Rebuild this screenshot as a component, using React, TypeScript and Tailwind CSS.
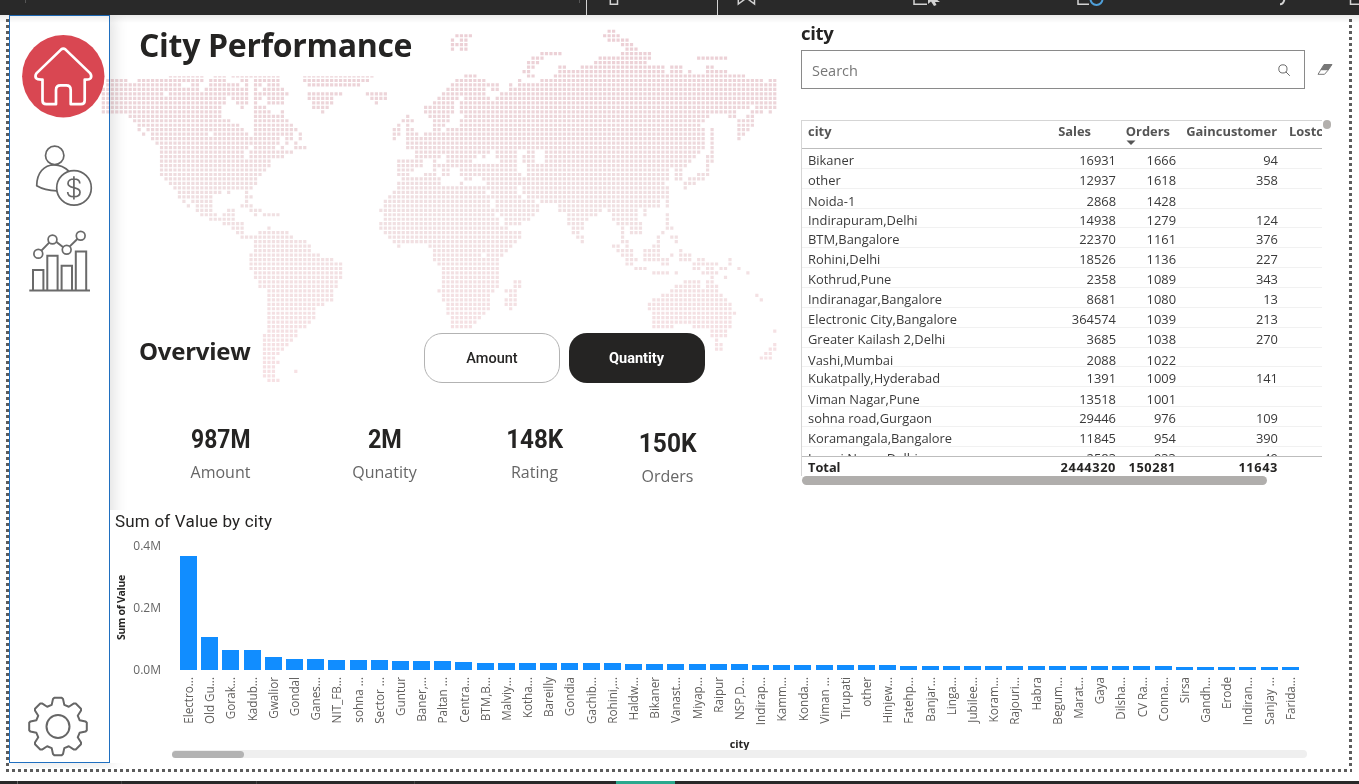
import React from "react";

type Run = [number, number];

// Land runs of the dotted world map, one entry per row: [from, to] along the row.
const WEST: Record<number, Run[]> = {
  10: [[210, 300], [345, 375], [400, 535], [612, 815]],
  11: [[23, 80], [117, 200], [216, 310], [330, 375], [425, 440], [465, 535], [612, 805]],
  12: [[23, 185], [196, 240], [278, 295], [330, 410], [438, 438], [465, 480], [505, 535], [625, 778]],
  13: [[10, 290], [318, 395], [412, 440], [465, 465], [492, 548]],
  14: [[10, 190], [212, 440], [465, 480], [492, 562], [625, 722], [802, 855]],
  15: [[10, 378], [398, 440], [465, 480], [505, 548], [625, 695], [815, 855]],
  16: [[10, 205], [225, 370], [412, 440], [465, 465], [505, 548], [640, 695], [828, 828]],
  17: [[10, 232], [250, 365], [425, 425], [465, 495], [640, 680]],
  18: [[10, 360], [465, 508], [548, 548], [668, 668]],
  19: [[90, 362], [465, 548]],
  20: [[104, 388], [465, 562]],
  21: [[117, 415], [465, 575]],
  22: [[117, 117], [144, 430], [465, 588]],
  23: [[131, 131], [158, 320], [345, 440], [465, 575], [600, 600]],
  24: [[158, 535], [562, 575], [600, 600]],
  25: [[171, 535], [562, 562], [588, 588]],
  26: [[185, 415], [428, 440], [465, 520], [548, 548], [588, 615]],
  27: [[185, 428], [452, 575]],
  28: [[185, 428], [452, 548]],
  29: [[185, 508]],
  30: [[185, 508]],
  31: [[185, 495]],
  32: [[185, 480]],
  33: [[198, 468]],
  34: [[212, 468]],
  35: [[225, 455]],
  36: [[238, 360], [387, 387], [440, 440]],
  37: [[238, 335], [440, 455]],
  38: [[252, 252], [278, 335], [440, 440]],
  39: [[265, 265], [290, 335], [425, 455]],
  40: [[292, 335], [387, 400], [452, 480]],
  41: [[305, 348], [372, 400], [465, 465], [492, 535]],
  42: [[332, 400]],
  43: [[372, 428]],
  44: [[400, 428], [507, 507]],
  45: [[415, 425], [480, 562]],
  46: [[428, 575]],
  47: [[465, 615]],
  48: [[465, 628]],
  49: [[465, 628]],
  50: [[452, 655]],
  51: [[452, 695]],
  52: [[452, 722]],
  53: [[452, 722]],
  54: [[465, 722]],
  55: [[465, 722]],
  56: [[480, 708]],
  57: [[480, 708]],
  58: [[505, 695]],
  59: [[505, 695]],
  60: [[505, 695]],
  61: [[505, 668]],
  62: [[505, 642]],
  63: [[505, 642]],
  64: [[505, 642]],
  65: [[505, 628]],
  66: [[505, 615]],
  67: [[505, 588]],
  68: [[493, 588]],
  69: [[493, 575]],
  70: [[493, 562]],
  71: [[493, 548]],
  72: [[493, 535]],
  73: [[493, 522]],
  74: [[493, 535]],
  75: [[493, 522]],
  76: [[493, 522], [587, 587]],
  77: [[493, 522]],
  78: [[507, 535]],
};

const EAST: Record<number, Run[]> = {
  0: [[688, 700]],
  1: [[230, 272], [675, 713]],
  2: [[213, 213], [245, 258], [688, 713], [728, 740]],
  3: [[213, 258], [728, 755]],
  4: [[213, 213], [245, 258], [740, 768]],
  5: [[485, 540], [728, 808]],
  6: [[458, 485], [660, 808], [955, 1038]],
  7: [[445, 472], [648, 795]],
  8: [[445, 458], [540, 555], [607, 850], [875, 903], [983, 997]],
  9: [[432, 445], [540, 850], [875, 903], [930, 930], [983, 1038]],
  10: [[258, 285], [445, 458], [527, 1090]],
  11: [[232, 312], [418, 418], [485, 1145], [1170, 1184]],
  12: [[218, 350], [392, 392], [418, 560], [580, 1184]],
  13: [[205, 312], [338, 350], [392, 560], [580, 1184]],
  14: [[190, 312], [365, 1184]],
  15: [[178, 232], [258, 325], [352, 1184]],
  16: [[165, 218], [245, 1184]],
  17: [[138, 218], [245, 1103], [1130, 1184]],
  18: [[138, 218], [245, 1063], [1117, 1145], [1170, 1170]],
  19: [[83, 83], [152, 205], [258, 985], [1050, 1062], [1103, 1117]],
  20: [[70, 97], [165, 205], [245, 970], [1077, 1117]],
  21: [[56, 56], [83, 83], [165, 190], [245, 960], [1077, 1117]],
  22: [[43, 56], [83, 97], [165, 178], [205, 970], [997, 997], [1077, 1103]],
  23: [[43, 56], [83, 110], [138, 970], [997, 997], [1077, 1090]],
  24: [[43, 43], [83, 970], [997, 997], [1077, 1077]],
  25: [[83, 970], [997, 997]],
  26: [[83, 970], [997, 997]],
  27: [[110, 325], [350, 405], [445, 460], [500, 955], [997, 997]],
  28: [[110, 180], [205, 285], [310, 310], [350, 405], [432, 460], [500, 945], [983, 997]],
  29: [[56, 125], [165, 165], [205, 270], [365, 405], [432, 458], [500, 930], [983, 997]],
  30: [[56, 125], [165, 178], [190, 405], [445, 917], [983, 983]],
  31: [[56, 97], [165, 165], [190, 205], [245, 405], [445, 860], [890, 903], [983, 983]],
  32: [[56, 83], [138, 165], [190, 205], [245, 418], [445, 860], [890, 903], [957, 983]],
  33: [[70, 178], [258, 270], [312, 418], [432, 860], [890, 903], [930, 970]],
  34: [[56, 178], [245, 245], [325, 850], [917, 943]],
  35: [[56, 405], [432, 860], [917, 917]],
  36: [[43, 312], [338, 405], [432, 860]],
  37: [[30, 325], [338, 418], [445, 860]],
  38: [[16, 325], [350, 445], [458, 458], [485, 835], [862, 862]],
  39: [[16, 325], [350, 470], [540, 835], [862, 862]],
  40: [[3, 338], [352, 470], [540, 555], [567, 660], [688, 768], [795, 795]],
  41: [[16, 338], [365, 460], [567, 640], [700, 770], [795, 795], [862, 862]],
  42: [[16, 350], [378, 445], [567, 620], [700, 770], [862, 862]],
  43: [[3, 350], [378, 420], [567, 608], [715, 782], [862, 862]],
  44: [[3, 378], [580, 608], [728, 728], [755, 782], [862, 875]],
  45: [[16, 418], [580, 595], [728, 728], [755, 782], [848, 848]],
  46: [[30, 418], [595, 608], [728, 728], [835, 835], [875, 890]],
  47: [[43, 405], [608, 608], [728, 740], [835, 835], [890, 890]],
  48: [[56, 56], [152, 390], [700, 713], [740, 740], [822, 835]],
  49: [[165, 378], [713, 755], [795, 835], [903, 903]],
  50: [[165, 300], [325, 365], [728, 755], [795, 835], [875, 875], [903, 930]],
  51: [[165, 350], [740, 768], [795, 835], [848, 862], [903, 930], [957, 970], [1050, 1050]],
  52: [[178, 350], [740, 755], [848, 862], [943, 1010], [1050, 1050]],
  53: [[190, 350], [768, 795], [943, 957], [983, 1000], [1023, 1037], [1077, 1077]],
  54: [[190, 350], [822, 862], [890, 890], [970, 1010], [1103, 1103]],
  55: [[190, 350], [997, 997], [1037, 1037]],
  56: [[190, 350], [405, 418], [917, 957], [983, 997]],
  57: [[190, 350], [405, 418], [890, 957], [983, 1010]],
  58: [[178, 338], [378, 405], [875, 1010]],
  59: [[190, 325], [392, 405], [848, 1025], [1130, 1130]],
  60: [[190, 325], [378, 405], [822, 1037], [1145, 1145]],
  61: [[205, 325], [378, 405], [808, 1050]],
  62: [[205, 325], [392, 392], [808, 1050]],
  63: [[205, 312], [822, 1063]],
  64: [[218, 300], [822, 1050]],
  65: [[218, 285], [822, 1050]],
  66: [[218, 272], [822, 875], [943, 1050]],
  67: [[1000, 1037], [1184, 1184]],
  68: [[1000, 1037]],
  69: [[1010, 1010]],
  70: [[1010, 1023], [1184, 1184]],
  71: [[1010, 1023], [1170, 1184]],
  72: [[1157, 1170]],
  73: [[1145, 1170]],
};

const PITCH = 4.476;

function mapPath(): string {
  const dots = new Set<string>();
  const collect = (table: Record<number, Run[]>, shift: number) => {
    Object.entries(table).forEach(([row, runs]) => {
      runs.forEach(([a, b]) => {
        const from = Math.round((a + shift - 9.6) / (PITCH * 3));
        const to = Math.round((b + shift - 9.6) / (PITCH * 3));
        for (let c = from; c <= to; c++) dots.add(`${c},${row}`);
      });
    });
  };
  collect(WEST, 0);
  collect(EAST, 840);
  let d = "";
  dots.forEach((key) => {
    const [c, r] = key.split(",").map(Number);
    const x = 1.75 + c * PITCH;
    const y = 1.65 + r * PITCH;
    // The northern edge of the Americas is cut through the middle of its dots.
    const cut = r === 10 && c < 62 ? 1.8 : 0;
    d += `M${x.toFixed(2)} ${(y + cut).toFixed(2)}h3.2v${(3.2 - cut).toFixed(1)}h-3.2z`;
  });
  return d;
}

const MAP_PATH = mapPath();

function WorldMap() {
  return (
    <svg className="pointer-events-none absolute left-[100px] top-[28px]" width="680" height="358" viewBox="0 0 680 358">
      <defs>
        <linearGradient id="land" x1="0" y1="0" x2="0" y2="358" gradientUnits="userSpaceOnUse">
          <stop offset="0" stopColor="#eccfd5" />
          <stop offset="0.25" stopColor="#edd6da" />
          <stop offset="0.5" stopColor="#f0e0e2" />
          <stop offset="1" stopColor="#f7e1e4" />
        </linearGradient>
      </defs>
      <path d={MAP_PATH} fill="url(#land)" />
    </svg>
  );
}

function gearPath(): string {
  const tooth: Run[] = [[-6.3, -21.6], [-5, -27.6], [-3.7, -28.8], [3.7, -28.8], [5, -27.6], [6.3, -21.6]];
  const pts: string[] = [];
  for (let i = 0; i < 8; i++) {
    const t = (i * Math.PI) / 4;
    tooth.forEach(([x, y]) => {
      pts.push(`${(x * Math.cos(t) - y * Math.sin(t)).toFixed(2)} ${(x * Math.sin(t) + y * Math.cos(t)).toFixed(2)}`);
    });
  }
  return `M${pts.join("L")}Z`;
}

function Sidebar() {
  return (
    <aside className="flex h-[748px] w-[101px] shrink-0 flex-col items-start border border-[#1f6fc0] bg-white shadow-[4px_0_14px_rgba(0,0,0,0.12)]">
      <svg className="ml-3 mt-[19px]" width="83" height="84" viewBox="22 35 83 84">
        <circle cx="63.3" cy="76.3" r="41.2" fill="#d94752" />
        <path
          d="M61 49.6Q63.3 47.6 65.6 49.6L90.3 73.4Q92 76 90.6 78.2Q89.4 79.8 84.7 79.6V100.6Q84.7 104.2 81 104.2H70.7V90Q70.7 85.4 66.2 85.4H60.6Q56 85.4 56 90V104.2H46.2Q42.5 104.2 42.5 100.6V79.6Q37.4 79.8 36 78.2Q34.8 76 36.4 73.4Z"
          fill="none" stroke="#fff" strokeWidth="2.7" strokeLinejoin="round"
        />
      </svg>
      <svg className="ml-[25px] mt-[25px]" width="60" height="64" viewBox="35 144 60 64" fill="none" stroke="#666" strokeWidth="1.7">
        <circle cx="54.7" cy="155.4" r="9.2" />
        <path d="M57 190.9C50 190.7 42 189 36.7 185.8C36.7 173 44 164.8 54.2 164.8C60 164.8 65 167.3 68.8 171.2" strokeLinejoin="round" />
        <circle cx="74" cy="187.9" r="17.3" />
        <path d="M73.9 176.2V199.4M79.8 183.6C79.8 180.6 77.4 179 73.9 179C70.4 179 68 180.8 68 183.4C68 189.4 80 185.8 80 192.2C80 195 77.4 196.7 73.9 196.7C70.2 196.7 67.7 195 67.7 191.9" />
      </svg>
      <svg className="ml-[18px] mt-[21px]" width="63" height="64" viewBox="28 229 63 64" fill="none" stroke="#6a6a6a" strokeWidth="2">
        <path d="M29.3 290.4H90M33 290V270H43.4V290M47.3 290V255.8H57.6V290M61.6 290V265.8H72V290M75.8 290V251.5H86.2V290M41.4 250.6L49.4 242.4M56.2 241.8L63.2 247.2M69.8 246.4L77.6 238.8" />
        <g strokeWidth="1.7">
          <circle cx="38.3" cy="253.8" r="4.4" />
          <circle cx="52.5" cy="239.5" r="4.4" />
          <circle cx="66.7" cy="249.8" r="4.4" />
          <circle cx="80.7" cy="235.8" r="4.4" />
        </g>
      </svg>
      <svg className="mb-[5px] ml-[18px] mt-auto" width="60" height="61" viewBox="-30 -30.5 60 61" fill="none" stroke="#666" strokeWidth="2" strokeLinejoin="round">
        <path d={gearPath()} />
        <circle r="11.5" />
      </svg>
    </aside>
  );
}

function Toolbar() {
  return (
    <header className="h-[15px] w-full shrink-0 bg-[#292929]">
      <svg width="1359" height="15" viewBox="0 0 1359 15" fill="none" stroke="#d2d2d2" strokeWidth="1.5">
        <path d="M25.5 0V3M579.5 0V3" stroke="#555" strokeWidth="1" />
        <path d="M586.5 0V15M717.5 0V15" strokeWidth="1" />
        <path d="M610.3 0V4.2H617.5V0" />
        <path d="M738.3 0V4L746.5 -2L754.5 4V0" />
        <path d="M914 0V4.3H927" />
        <path d="M928 0V4L931 1.5L934 6L936.5 5L935 2H940L936 -1H928Z" fill="#d2d2d2" stroke="none" />
        <path d="M1078 0V4.3H1089" />
        <path d="M1090.5 -1A6 6 0 0 0 1102.5 -1" stroke="#4f9fd8" strokeWidth="2" />
        <path d="M1284.5 -1Q1283.5 4.3 1280 4.3" strokeWidth="2" />
        <path d="M1350.5 0V4.3H1359" />
      </svg>
    </header>
  );
}

const CARDS = [
  { value: "987M", label: "Amount", box: "w-[163px]", fit: "scale-x-[0.88]" },
  { value: "2M", label: "Qunatity", box: "w-[165px]", fit: "scale-x-[0.9]" },
  { value: "148K", label: "Rating", box: "w-[135px]", fit: "scale-x-[0.93]" },
  { value: "150K", label: "Orders", box: "w-[131px] pt-1", fit: "scale-x-[0.94]" },
];

function Overview() {
  return (
    <section className="relative flex w-[691px] flex-col pl-[29px]">
      <h1 className="mt-[8px] h-11 whitespace-nowrap text-[32px] font-bold leading-[44px] tracking-[-0.3px] text-[#252423]">City Performance</h1>
      <div className="mt-[266px] flex h-[50px] items-start">
        <h2 className="w-[285px] text-[24px] font-bold leading-[36px] tracking-[-0.25px] text-[#252423]">Overview</h2>
        <button className="h-[50px] w-[136px] rounded-[18px] border border-[#b3b3b3] bg-white pt-[2px] text-[14.5px] font-medium text-[#252423] font-[Roboto,sans-serif]">Amount</button>
        <button className="ml-[9px] h-[50px] w-[136px] rounded-[18px] bg-[#252423] pr-px pt-[2px] text-[14.5px] font-bold text-white font-[Roboto,sans-serif]">Quantity</button>
      </div>
      <div className="mt-[40px] flex">
        {CARDS.map((c) => (
          <div key={c.label} className={`${c.box} flex flex-col items-center text-center`}>
            <div className={`${c.fit} h-8 text-[26px] font-bold leading-8 text-[#252423] font-[Roboto,sans-serif]`}>{c.value}</div>
            <div className="mt-[5px] h-6 text-[16px] leading-6 text-[#666]">{c.label}</div>
          </div>
        ))}
      </div>
    </section>
  );
}

const ROWS: [string, string, string, string][] = [
  ["Bikaner", "16931", "1666", "94"],
  ["other", "12937", "1618", "358"],
  ["Noida-1", "2868", "1428", ""],
  ["Indirapuram,Delhi", "14938", "1279", "124"],
  ["BTM,Bangalore", "22370", "1161", "376"],
  ["Rohini,Delhi", "18526", "1136", "227"],
  ["Kothrud,Pune", "2358", "1089", "343"],
  ["Indiranagar,Bangalore", "8681", "1080", "13"],
  ["Electronic City,Bangalore", "364574", "1039", "213"],
  ["Greater Kailash 2,Delhi", "3685", "1038", "270"],
  ["Vashi,Mumbai", "2088", "1022", ""],
  ["Kukatpally,Hyderabad", "1391", "1009", "141"],
  ["Viman Nagar,Pune", "13518", "1001", ""],
  ["sohna road,Gurgaon", "29446", "976", "109"],
  ["Koramangala,Bangalore", "11845", "954", "390"],
  ["Laxmi Nagar,Delhi", "2583", "933", "49"],
];

const GRID = "grid grid-cols-[214px_100px_60px_102px]";

function CityPanel() {
  return (
    <section className="flex w-[548px] flex-col">
      <h3 className="mt-[5px] h-[26px] text-[18.5px] font-bold leading-[26px] tracking-[-0.3px] text-[#252423]">city</h3>
      <div className="mt-[4px] flex h-[39px] items-center">
        <div className="flex h-[39px] w-[504px] items-center justify-between border border-[#8a8a8a] pl-[10px] pr-[14px]">
          <span className="pt-[2px] text-[14.5px] text-[#777]">Search</span>
          <svg className="mt-px" width="12.5" height="12.5" viewBox="0 0 14 14" fill="none" stroke="#666" strokeWidth="1.1">
            <circle cx="5.5" cy="5.5" r="4.6" />
            <path d="M8.8 8.8L13.2 13.2" />
          </svg>
        </div>
        <svg className="ml-3" width="16" height="14" viewBox="0 0 16 14" stroke="#777" strokeWidth="1">
          <path d="M7 1.5H15L11 7.3H3.5Z" fill="#777" />
          <path d="M3.5 7.3L1 11.3H7.5L11 7.3" fill="#fff" />
        </svg>
      </div>
      <div className="mt-[31px] flex">
        <div className="h-[356px] w-[521px] overflow-hidden border-l border-t border-[#d5d5d5]">
          <div className="relative h-[28px] w-[520px] overflow-hidden border-b border-[#bdbdbd] text-[12.9px] font-bold leading-[21px] text-[#555]">
            <div className="flex whitespace-nowrap">
              <span className="w-[249px] shrink-0 pl-[6px]">city</span>
              <span className="w-[40px] shrink-0 text-right">Sales</span>
              <span className="w-[79px] shrink-0 text-right">Orders</span>
              <span className="w-[107px] shrink-0 text-right">Gaincustomer</span>
              <span className="w-[45px] shrink-0 overflow-hidden pl-3">Lostc</span>
            </div>
            <svg className="absolute left-[324px] top-[19px]" width="10" height="6" viewBox="0 0 10 6">
              <path d="M0.5 0.5H9.5L5 5Z" fill="#555" />
            </svg>
          </div>
          <div className="h-[307px] overflow-hidden">
            {ROWS.map(([city, sales, orders, gain]) => (
              <div key={city} className={`${GRID} h-[19.87px] border-b border-[#f1f1f1] text-right text-[12.9px] text-[#3a3a3a] ${gain ? "leading-[22px]" : "leading-[24px]"}`}>
                <span className="whitespace-nowrap pl-[6px] text-left">{city}</span>
                <span>{sales}</span>
                <span>{orders}</span>
                <span>{gain}</span>
              </div>
            ))}
          </div>
          <div className={`${GRID} h-[20px] border-t border-[#bdbdbd] bg-white text-right text-[12.8px] font-bold leading-[20px] text-[#252423]`}>
            <span className="pl-[6px] text-left">Total</span>
            <span className="tracking-[0.6px]">2444320</span>
            <span className="tracking-[0.6px]">150281</span>
            <span className="tracking-[0.6px]">11643</span>
          </div>
        </div>
        <div className="ml-[1px] h-[9px] w-[8px] rounded-full bg-[#b3b0ad]" />
      </div>
      <div className="ml-px h-[9px] w-[465px] rounded-full bg-[#b0aeac]" />
    </section>
  );
}

const BARS: [string, number][] = [
  ["Electro...", 113.6], ["Old Gu...", 33.5], ["Gorak...", 20.5], ["Kadub...", 20.3], ["Gwalior", 13], ["Gondal", 11.5],
  ["Ganes...", 11.2], ["NIT_FB...", 10.5], ["sohna ...", 9.8], ["Sector ...", 9.6], ["Guntur", 8.9], ["Baner,...", 8.8],
  ["Paltan ...", 8.6], ["Centra...", 7.8], ["BTM,B...", 7.5], ["Malviy...", 7.4], ["Kotha...", 7.2], ["Bareilly", 7.1],
  ["Gondia", 7], ["Gachib...", 6.8], ["Rohini,...", 6.7], ["Haldw...", 6.4], ["Bikaner", 6], ["Vanast...", 5.8],
  ["Miyap...", 5.8], ["Raipur", 5.7], ["NSP,D...", 5.7], ["Indirap...", 5.4], ["Kamm...", 5.2], ["Konda...", 5.1],
  ["Viman ...", 4.9], ["Tirupati", 4.8], ["other", 4.7], ["Hinjew...", 4.6], ["Fatehp...", 4.5], ["Banjar...", 4.4],
  ["Linga...", 4.4], ["Jubilee...", 4.3], ["Koram...", 4.3], ["Rajouri...", 4.2], ["Habra", 4.2], ["Begum...", 4.1],
  ["Marat...", 4], ["Gaya", 3.8], ["Dilsha...", 3.7], ["CV Ra...", 3.6], ["Conna...", 3.6], ["Sirsa", 3.5],
  ["Gandh...", 3.5], ["Erode", 3.4], ["Indiran...", 3.4], ["Sanjay ...", 3.3], ["Farida...", 3.2],
];

function CityChart() {
  return (
    <section className="relative flex h-[253px] w-[1239px] flex-col bg-white pl-[5px]">
      <h3 className="h-[22px] text-[17px] leading-[22px] tracking-[0.2px] text-[#252423] font-[Roboto,sans-serif]">Sum of Value by city</h3>
      <div className="flex h-[204px]">
        <div className="flex w-[12px] justify-center pt-[42px]">
          <span className="h-[68px] rotate-180 whitespace-nowrap text-center text-[10.5px] font-bold leading-[13px] tracking-[-0.3px] text-[#252423] [writing-mode:vertical-rl]">Sum of Value</span>
        </div>
        <div className="flex h-[146px] w-[34px] flex-col justify-between pt-[6px] text-right text-[12px] leading-4 text-[#666]">
          <span>0.4M</span>
          <span>0.2M</span>
          <span>0.0M</span>
        </div>
        <div className="ml-[17px] flex">
          {BARS.map(([name, h]) => (
            <div key={name} className="flex w-[21.19px] shrink-0 flex-col items-center">
              <div className="flex h-[138px] w-full items-end pl-[2px]">
                <div className="w-[17px] bg-[#118dff]" style={{ height: h }} />
              </div>
              <span className="mr-px mt-[7px] rotate-180 whitespace-nowrap text-[11.7px] leading-4 text-[#605e5c] [writing-mode:vertical-rl]">{name}</span>
            </div>
          ))}
        </div>
      </div>
      <div className="h-[16px] pl-[15px] text-center text-[10.8px] font-bold leading-4 text-[#252423]">city</div>
      <div className="ml-[57px] mt-[-2px] h-[8px] w-[1135px] rounded-full bg-[#efefef]">
        <div className="mt-px h-[7px] w-[72px] rounded-full bg-[#b3b3b3]" />
      </div>
    </section>
  );
}

export default function App() {
  return (
    <div className="flex h-[784px] w-[1359px] flex-col overflow-hidden bg-white font-['Open_Sans','Noto_Sans',sans-serif]">
      <Toolbar />
      <main className="flex h-[766px] shrink-0 flex-col">
        <div className="flex h-[754px] pl-[6px]">
          <div className="mt-1 h-[750px] w-[3px] bg-[repeating-linear-gradient(to_bottom,#5c5c5c_0_3px,transparent_3px_6px)]" />
          <div className="flex h-[753px] w-[1340px] overflow-hidden">
            <Sidebar />
            <div className="flex flex-col">
              <div className="flex h-[495px]">
                <Overview />
                <CityPanel />
              </div>
              <CityChart />
            </div>
          </div>
          <div className="mt-1 h-[750px] w-[3px] bg-[repeating-linear-gradient(to_bottom,#5c5c5c_0_3px,transparent_3px_6px)]" />
        </div>
        <div className="ml-[6px] h-[3px] w-[1346px] bg-[repeating-linear-gradient(to_right,#5c5c5c_0_3px,transparent_3px_6px)]" />
      </main>
      <footer className="flex h-[3px] shrink-0 bg-[#292929]">
        <div className="ml-[17px] w-px bg-[#666]" />
        <div className="ml-[103px] w-px bg-[#444]" />
        <div className="ml-[134px] w-px bg-[#444]" />
        <div className="ml-[157px] w-px bg-[#444]" />
        <div className="ml-[201px] h-[3px] w-[59px] bg-[#2aa88d]" />
      </footer>
      <div className="pointer-events-none absolute left-0 top-[15px] h-2 w-[1359px] bg-gradient-to-b from-[#00000014] to-transparent" />
      <div className="mix-blend-multiply">
        <WorldMap />
      </div>
    </div>
  );
}
